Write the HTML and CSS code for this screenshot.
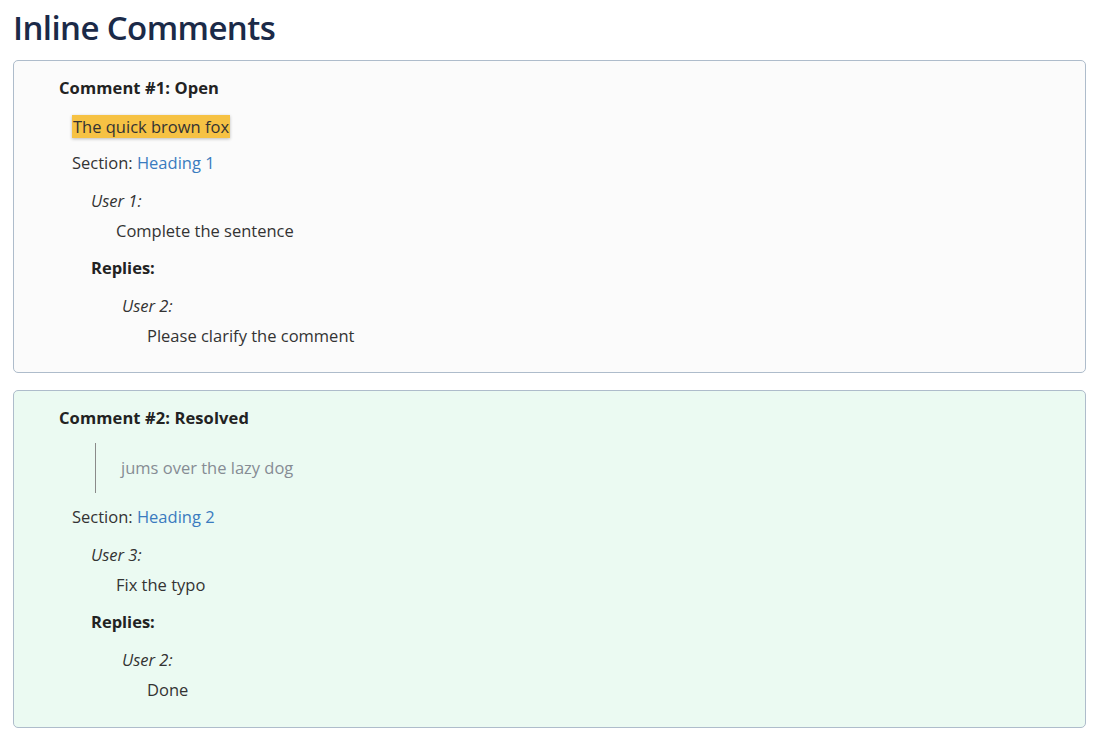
FILE: index.html
```html
<!DOCTYPE html>
<html lang="en">
<head>
<meta charset="utf-8">
<title>Inline Comments</title>
<link rel="stylesheet" href="styles.css">
</head>
<body>
<h1 class="title">Inline Comments</h1>

<div class="card card-open">
  <div class="comment-head">Comment #1: Open</div>
  <div class="quote-row"><span class="highlight">The quick brown fox</span></div>
  <div class="section-row">Section: <a class="link" href="#">Heading 1</a></div>
  <div class="thread">
    <div class="user">User 1:</div>
    <div class="message">Complete the sentence</div>
    <div class="replies-label">Replies:</div>
    <div class="reply">
      <div class="user">User 2:</div>
      <div class="message">Please clarify the comment</div>
    </div>
  </div>
</div>

<div class="card card-resolved">
  <div class="comment-head">Comment #2: Resolved</div>
  <blockquote class="resolved-quote">jums over the lazy dog</blockquote>
  <div class="section-row">Section: <a class="link" href="#">Heading 2</a></div>
  <div class="thread">
    <div class="user">User 3:</div>
    <div class="message">Fix the typo</div>
    <div class="replies-label">Replies:</div>
    <div class="reply">
      <div class="user">User 2:</div>
      <div class="message">Done</div>
    </div>
  </div>
</div>
</body>
</html>
```

FILE: styles.css
```css
* { box-sizing: border-box; }

body {
  margin: 0;
  padding: 0 18px 0 13px;
  font-family: "Open Sans", "Noto Sans", sans-serif;
  font-size: 16.5px;
  line-height: 24px;
  color: #2b2b2b;
  background: #fff;
}

.title {
  margin: 0;
  padding-top: 6px;
  height: 60px;
  font-size: 33px;
  line-height: 44px;
  font-weight: 600;
  color: #1b2a48;
  letter-spacing: -0.6px;
}

.card {
  border: 1px solid #aebccb;
  border-radius: 5px;
  padding: 15px 12px 24px 45px;
  margin-bottom: 17px;
}

.card-open { background: #fbfbfb; }
.card-resolved { background: #ebfaf2; padding-bottom: 25px; }

.comment-head {
  font-weight: 700;
  color: #222;
  letter-spacing: 0.1px;
}

.quote-row {
  margin-top: 15px;
  padding-left: 13px;
}

.highlight {
  background: #f6c244;
  box-shadow: 0 1px 3px rgba(0,0,0,0.25);
  padding: 0 1px;
  color: #333;
}

.section-row {
  margin-top: 12px;
  padding-left: 13px;
  color: #333;
}

.link {
  color: #3a7bbf;
  text-decoration: none;
}

.thread {
  padding-left: 32px;
}

.user {
  margin-top: 14px;
  font-style: italic;
  color: #333;
}

.message {
  margin-top: 6px;
  padding-left: 25px;
  color: #333;
}

.replies-label {
  margin-top: 13px;
  font-weight: 700;
  color: #222;
}

.reply {
  padding-left: 31px;
}

.resolved-quote {
  margin: 13px 0 0 36px;
  padding: 13px 0 13px 25px;
  border-left: 1px solid #8a8a8a;
  color: #868c94;
}
```
